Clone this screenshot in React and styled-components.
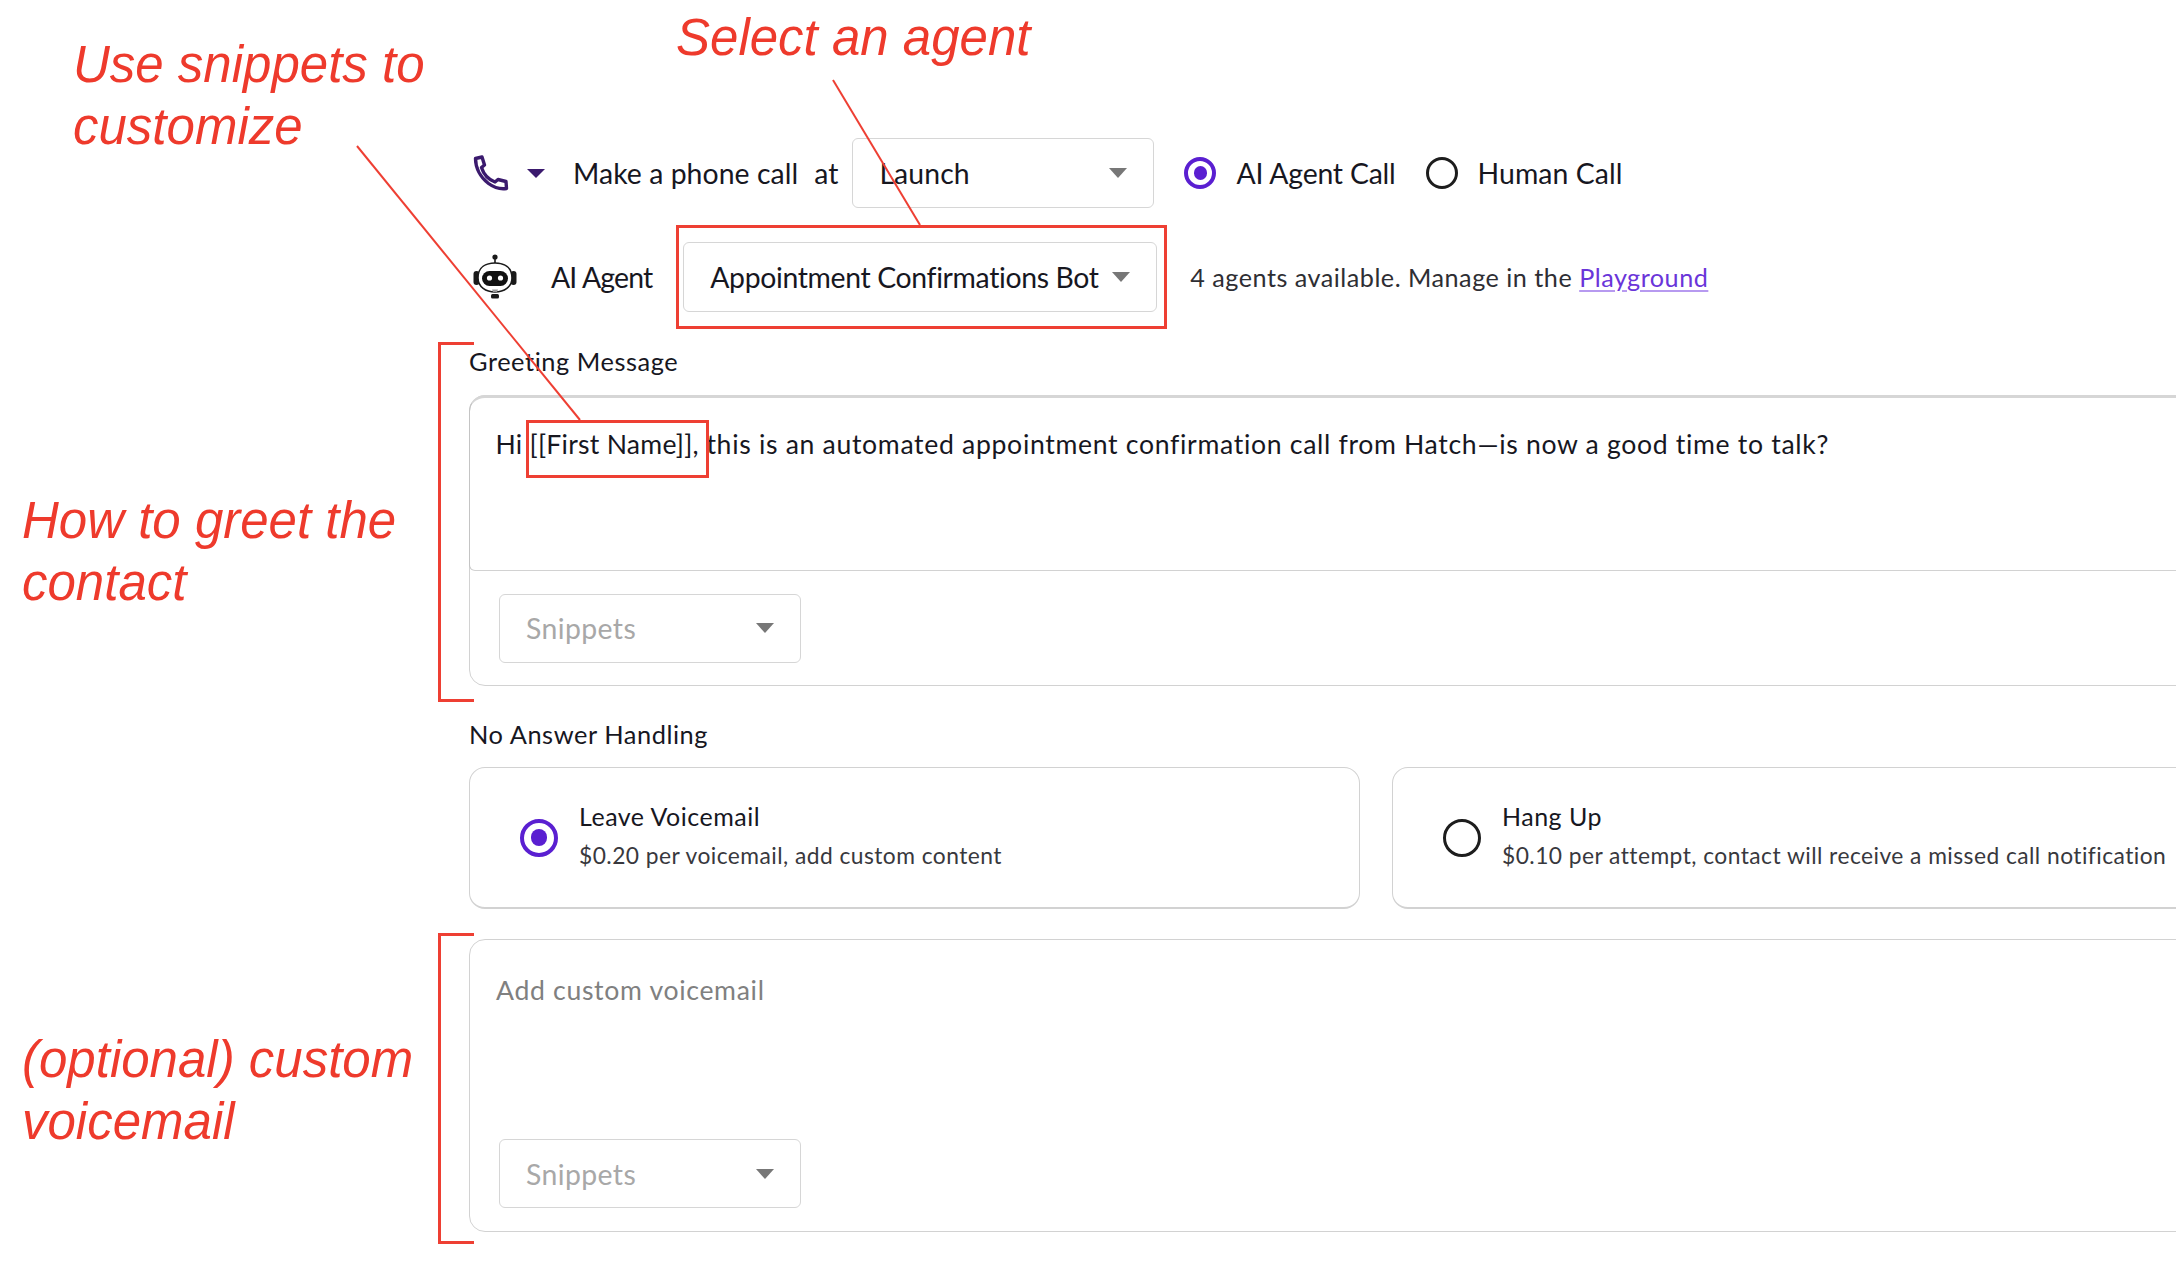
import React from 'react';
import styled, { createGlobalStyle } from 'styled-components';

const Global = createGlobalStyle`
  html, body { margin: 0; padding: 0; background: #fff; overflow: hidden; }
  body { width: 2176px; height: 1274px; font-family: Lato, "Noto Sans", sans-serif; color: #17171f; }
  * { box-sizing: border-box; }
`;

const Page = styled.div`
  position: relative;
  width: 2176px;
  height: 1274px;
  overflow: hidden;
  padding: 138px 0 0 469px;
`;
const Column = styled.main`
  width: 1900px;
  display: flex;
  flex-direction: column;
`;
const Row = styled.div`
  display: flex;
  align-items: center;
  height: 70px;
  padding-left: 4px;
  margin-bottom: ${p => p.$mb || 0}px;
`;
const PhoneGroup = styled.div`
  display: flex;
  align-items: center;
  gap: 18px;
  width: 100px;
  flex: none;
`;
const Caret = styled.span`
  display: inline-block;
  flex: none;
  width: 0;
  height: 0;
  border-left: ${p => p.$w || 9}px solid transparent;
  border-right: ${p => p.$w || 9}px solid transparent;
  border-top: ${p => p.$h || 10}px solid ${p => p.$color || '#777'};
`;
const RowText = styled.span`
  font-size: 28.4px;
  letter-spacing: ${p => p.$ls || 0}px;
  margin-left: ${p => p.$ml || 0}px;
  margin-right: ${p => p.$mr || 0}px;
  white-space: nowrap;
  color: #17171f;
`;
const Select = styled.div`
  display: flex;
  align-items: center;
  justify-content: space-between;
  width: ${p => p.$w}px;
  height: ${p => p.$h || 70}px;
  flex: none;
  border: 1.5px solid #d6d6d6;
  border-radius: 6px;
  padding: 0 26px;
  background: #fff;
`;
const SelectText = styled.span`
  font-size: 28.4px;
  letter-spacing: ${p => p.$ls || 0}px;
  padding-bottom: ${p => p.$muted ? 0 : 1}px;
  color: ${p => p.$muted ? '#a8a8a8' : '#17171f'};
  white-space: nowrap;
`;
const RadioOuter = styled.span`
  flex: none;
  width: ${p => p.$size || 32}px;
  height: ${p => p.$size || 32}px;
  border-radius: 50%;
  border: ${p => p.$on ? 4 : 3.5}px solid ${p => p.$on ? '#5a1fd1' : '#1d1d1d'};
  margin-left: ${p => p.$ml || 0}px;
  display: flex;
  align-items: center;
  justify-content: center;
  &::after {
    content: '';
    display: ${p => p.$on ? 'block' : 'none'};
    width: 55%;
    height: 55%;
    border-radius: 50%;
    background: #5a1fd1;
  }
`;
const RadioItem = styled.label`
  display: flex;
  align-items: center;
  gap: 20px;
  margin-left: ${p => p.$ml || 0}px;
`;
const Hint = styled.span`
  font-size: 25.2px;
  letter-spacing: 0.5px;
  color: #2e2e33;
  white-space: nowrap;
  margin-left: 33px;
`;
const Link = styled.a`
  color: #6a35d9;
  text-decoration: underline;
  text-decoration-color: #b79af0;
  text-underline-offset: 3px;
`;
const SectionLabel = styled.div`
  font-size: 25.4px;
  line-height: 36px;
  letter-spacing: 0.55px;
  margin-top: ${p => p.$mt}px;
  margin-bottom: ${p => p.$mb}px;
  white-space: nowrap;
`;
const MessageCard = styled.section`
  border: 1.5px solid #d2d2d2;
  border-radius: 16px;
  height: ${p => p.$h}px;
  display: flex;
  flex-direction: column;
  margin-bottom: ${p => p.$mb || 0}px;
`;
const MessageArea = styled.div`
  height: ${p => p.$h}px;
  flex: none;
  padding: ${p => p.$pt}px 0 0 26px;
  font-size: 26.6px;
  line-height: 36px;
  letter-spacing: 0.68px;
  white-space: nowrap;
  color: ${p => p.$placeholder ? '#808080' : '#17171f'};
  border-top: ${p => p.$framed ? '3px solid #d6d6d6' : 'none'};
  border-left: ${p => p.$framed ? '1.5px solid #c4c4c4' : 'none'};
  border-bottom: ${p => p.$framed ? '1.5px solid #d2d2d2' : 'none'};
  border-radius: ${p => p.$framed ? '16px 0 0 6px' : '0'};
  margin: ${p => p.$framed ? '-1.5px 0 0 -1.5px' : '0'};
`;
const Lead = styled.span`
  letter-spacing: 0.25px;
`;
const MessageFooter = styled.div`
  padding: ${p => p.$pt || 0}px 0 0 29px;
`;
const OptionGrid = styled.div`
  display: grid;
  grid-template-columns: 891px 1fr;
  column-gap: 32px;
  margin-bottom: 30px;
`;
const OptionCard = styled.label`
  display: flex;
  align-items: center;
  height: 142px;
  padding-left: ${p => p.$pl}px;
  gap: 21px;
  border: 1.5px solid #d2d2d2;
  border-bottom-width: 2.5px;
  border-radius: 16px;
`;
const OptionBody = styled.div`
  display: flex;
  flex-direction: column;
  gap: 7px;
  padding-bottom: 5px;
  white-space: nowrap;
`;
const OptionTitle = styled.div`
  font-size: 25px;
  line-height: 32px;
  letter-spacing: 0.5px;
`;
const OptionSub = styled.div`
  font-size: 22.8px;
  line-height: 32px;
  letter-spacing: 0.45px;
  color: #38383d;
`;

/* Review annotations drawn over the screenshot */
const Note = styled.div`
  position: absolute;
  left: ${p => p.$x}px;
  top: ${p => p.$y}px;
  font-family: "Liberation Sans", Arial, sans-serif;
  font-style: italic;
  font-size: 51px;
  line-height: 62px;
  color: #ee3a2c;
  white-space: nowrap;
`;
const RedBox = styled.div`
  position: absolute;
  left: ${p => p.$x}px;
  top: ${p => p.$y}px;
  width: ${p => p.$w}px;
  height: ${p => p.$h}px;
  border: 3px solid #ee3f33;
`;
const Bracket = styled.div`
  position: absolute;
  left: ${p => p.$x}px;
  top: ${p => p.$y}px;
  width: 36px;
  height: ${p => p.$h}px;
  border: 3px solid #ee3f33;
  border-right: none;
`;
const Leaders = styled.svg`
  position: absolute;
  left: 0;
  top: 0;
  pointer-events: none;
`;
const GlyphPhone = styled.svg`
  flex: none;
`;
const GlyphBot = styled.svg`
  flex: none;
  margin-left: -1px;
`;

const PhoneIcon = () => (
  <GlyphPhone width="36" height="36" viewBox="0 0 36 36" fill="none" stroke="#3b1a6e" strokeWidth="3.4" strokeLinejoin="round">
    <path d="M2.5 3.5 L9 2 L11.5 10 L8.5 12.5 C10.5 19 15.5 24.5 22 27 L25 24.5 L33 26.5 L33.5 33.5 C27 34.5 21 32.5 15.5 28.5 C7.5 22.5 2.5 13 2.5 3.5 Z" />
  </GlyphPhone>
);

const BotIcon = () => (
  <GlyphBot width="46" height="46" viewBox="0 0 46 46">
    <circle cx="23" cy="3" r="2.6" fill="#1a1a1a" />
    <path d="M23 4 V10" stroke="#1a1a1a" strokeWidth="1.6" />
    <rect x="1.5" y="17" width="6" height="14" rx="3" fill="#1a1a1a" />
    <rect x="38.5" y="17" width="6" height="14" rx="3" fill="#1a1a1a" />
    <path d="M23 9 C32 9 40 13 40 24 C40 33 32 38 23 38 C14 38 6 33 6 24 C6 13 14 9 23 9 Z" fill="#fff" stroke="#1a1a1a" strokeWidth="1.6" />
    <rect x="10" y="17" width="26" height="15" rx="7.5" fill="#111" />
    <circle cx="17.5" cy="24" r="2.6" fill="#fff" />
    <circle cx="28.5" cy="24" r="2.6" fill="#fff" />
    <path d="M20 35.5 H26 L25 38 H21 Z" fill="#9a9a9a" />
    <rect x="19" y="40" width="8" height="4.5" rx="1.5" fill="#1a1a1a" />
  </GlyphBot>
);

export default function App() {
  return (
    <Page>
      <Global />
      <Column>
        <Row $mb={34}>
          <PhoneGroup>
            <PhoneIcon />
            <Caret $color="#3b1a6e" $w={9} $h={9} />
          </PhoneGroup>
          <RowText $ls={0.05} $mr={16}>Make a phone call</RowText>
          <RowText $ls={0.05} $mr={14}>at</RowText>
          <Select $w={302}>
            <SelectText $ls={0.1}>Launch</SelectText>
            <Caret />
          </Select>
          <RadioOuter $on $ml={30} />
          <RowText $ls={-0.2} $ml={20}>AI Agent Call</RowText>
          <RadioItem $ml={30}>
            <RadioOuter />
            <RowText $ls={0.05}>Human Call</RowText>
          </RadioItem>
        </Row>
        <Row>
          <BotIcon />
          <RowText $ls={-0.85} $ml={33} $mr={31}>AI Agent</RowText>
          <Select $w={474}>
            <SelectText $ls={-0.35}>Appointment Confirmations Bot</SelectText>
            <Caret />
          </Select>
          <Hint>4 agents available. Manage in the <Link>Playground</Link></Hint>
        </Row>
        <SectionLabel $mt={31} $mb={16}>Greeting Message</SectionLabel>
        <MessageCard $h={291}>
          <MessageArea $framed $h={176} $pt={28}>
            <Lead>Hi [[First Name]],</Lead> this is an automated appointment confirmation call from Hatch—is now a good time to talk?
          </MessageArea>
          <MessageFooter $pt={23}>
            <Select $w={302} $h={69}>
              <SelectText $muted $ls={0.4}>Snippets</SelectText>
              <Caret />
            </Select>
          </MessageFooter>
        </MessageCard>
        <SectionLabel $mt={30} $mb={15}>No Answer Handling</SectionLabel>
        <OptionGrid>
          <OptionCard $pl={50}>
            <RadioOuter $on $size={38} />
            <OptionBody>
              <OptionTitle>Leave Voicemail</OptionTitle>
              <OptionSub>$0.20 per voicemail, add custom content</OptionSub>
            </OptionBody>
          </OptionCard>
          <OptionCard $pl={50}>
            <RadioOuter $size={38} />
            <OptionBody>
              <OptionTitle>Hang Up</OptionTitle>
              <OptionSub>$0.10 per attempt, contact will receive a missed call notification</OptionSub>
            </OptionBody>
          </OptionCard>
        </OptionGrid>
        <MessageCard $h={293}>
          <MessageArea $h={199} $pt={32} $placeholder>Add custom voicemail</MessageArea>
          <MessageFooter>
            <Select $w={302} $h={69}>
              <SelectText $muted $ls={0.4}>Snippets</SelectText>
              <Caret />
            </Select>
          </MessageFooter>
        </MessageCard>
      </Column>

      <Leaders width="2176" height="1274" viewBox="0 0 2176 1274">
        <line x1="833" y1="80" x2="920" y2="225" stroke="#ee3f33" strokeWidth="2" />
        <line x1="357" y1="146" x2="580" y2="420" stroke="#ee3f33" strokeWidth="2" />
      </Leaders>
      <RedBox $x={676} $y={225} $w={491} $h={104} />
      <RedBox $x={526} $y={420} $w={183} $h={58} />
      <Bracket $x={438} $y={342} $h={360} />
      <Bracket $x={438} $y={933} $h={311} />
      <Note $x={676} $y={7}>Select an agent</Note>
      <Note $x={73} $y={34}>Use snippets to<br />customize</Note>
      <Note $x={22} $y={490}>How to greet the<br />contact</Note>
      <Note $x={22} $y={1029}>(optional) custom<br />voicemail</Note>
    </Page>
  );
}
